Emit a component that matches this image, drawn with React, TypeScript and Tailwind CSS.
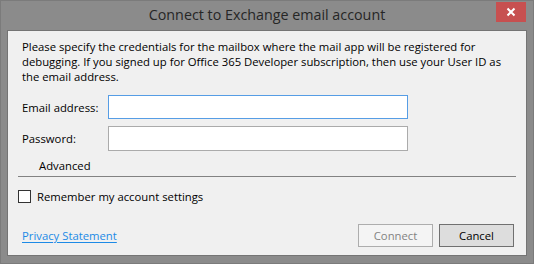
import React from "react";

export default function App() {
  const font = { fontFamily: '"Open Sans", "Noto Sans", sans-serif' };
  return (
    <div
      className="relative flex h-[264px] w-[534px] flex-col border border-[#7b7b7b] bg-[#8b8b8b]"
      style={font}
    >
      <div className="flex h-[29px] items-center justify-center pb-[2px] text-[14.3px] text-[#262626]">
        Connect to Exchange email account
      </div>
      <div className="absolute right-[7px] top-[1px] flex h-[20px] w-[30px] items-center justify-center bg-[#c75050]">
        <svg width="10" height="10" viewBox="0 0 10 10">
          <path d="M1.5 1.5 L8.5 8.5 M8.5 1.5 L1.5 8.5" stroke="#ffffff" strokeWidth="2" />
        </svg>
      </div>
      <div className="mx-[6px] flex h-[226px] flex-col border border-[#747474] bg-[#f0f0f0] text-[11.3px] leading-[15px] text-black">
        <div className="ml-[14px] mt-[8px] whitespace-nowrap">
          <div>Please specify the credentials for the mailbox where the mail app will be registered for</div>
          <div>debugging. If you signed up for Office 365 Developer subscription, then use your User ID as</div>
          <div>the email address.</div>
        </div>
        <div className="ml-[14px] mt-[11px] flex items-center">
          <div className="w-[86px]">Email address:</div>
          <div className="h-[24px] w-[300px] border border-[#569de5] bg-white" />
        </div>
        <div className="ml-[14px] mt-[7px] flex items-center">
          <div className="w-[86px]">Password:</div>
          <div className="h-[25px] w-[300px] border border-[#ababab] bg-white" />
        </div>
        <div className="ml-[31px] mt-[7px] h-[15px]">Advanced</div>
        <div className="ml-[10px] mt-[3px] h-px w-[498px] bg-[#828282]" />
        <div className="ml-[10px] mt-[12px] flex items-center gap-[6px]">
          <div className="h-[13px] w-[13px] border border-[#333333] bg-white" />
          <div>Remember my account settings</div>
        </div>
        <div className="mr-[12px] mt-[20px] flex items-center">
          <div className="ml-[14px] flex-1">
            <span className="cursor-pointer text-[#1c8ae6] underline underline-offset-[2px]">Privacy Statement</span>
          </div>
          <div className="flex gap-[6px]">
            <div className="flex h-[23px] w-[75px] items-center justify-center border border-[#adadad] bg-[#f4f4f4] text-[#838383]">
              Connect
            </div>
            <div className="flex h-[23px] w-[75px] items-center justify-center border border-[#707070] bg-[#dddddd] text-black">
              Cancel
            </div>
          </div>
        </div>
      </div>
    </div>
  );
}
